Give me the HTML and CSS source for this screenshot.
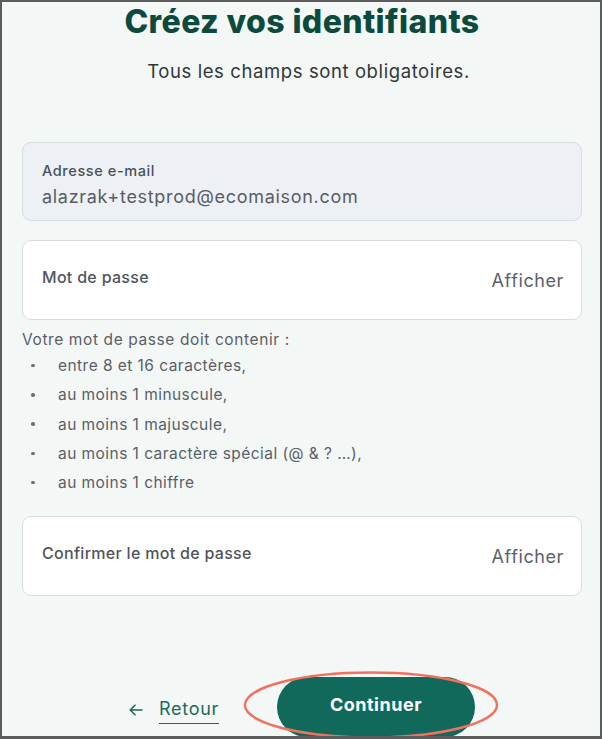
FILE: index.html
```html
<!DOCTYPE html>
<html lang="fr">
<head>
<meta charset="utf-8">
<title>Créez vos identifiants</title>
<link rel="stylesheet" href="styles.css">
</head>
<body>
<div class="frame">
  <main class="page">
    <h1 class="title">Créez vos identifiants</h1>
    <p class="subtitle">Tous les champs sont obligatoires.</p>

    <form class="form">
      <div class="field field-readonly">
        <span class="field-label">Adresse e-mail</span>
        <span class="field-value">alazrak+testprod@ecomaison.com</span>
      </div>

      <div class="field field-password">
        <span class="field-label">Mot de passe</span>
        <span class="show">Afficher</span>
      </div>

      <div class="rules">
        <p class="rules-intro">Votre mot de passe doit contenir :</p>
        <ul class="rules-list">
          <li>entre 8 et 16 caractères,</li>
          <li>au moins 1 minuscule,</li>
          <li>au moins 1 majuscule,</li>
          <li>au moins 1 caractère spécial (@ &amp; ? …),</li>
          <li>au moins 1 chiffre</li>
        </ul>
      </div>

      <div class="field field-password">
        <span class="field-label">Confirmer le mot de passe</span>
        <span class="show">Afficher</span>
      </div>
    </form>

    <div class="actions">
      <a class="back" href="#">
        <svg class="back-icon" width="14" height="12" viewBox="0 0 14 12" aria-hidden="true">
          <path d="M13 6H1.5M6 1.2L1.2 6L6 10.8" fill="none" stroke="currentColor" stroke-width="1.6" stroke-linecap="round" stroke-linejoin="round"/>
        </svg>
        <span class="back-text">Retour</span>
      </a>
      <div class="cta-wrap">
        <button class="cta" type="button">Continuer</button>
        <svg class="annotation" width="258" height="70" viewBox="0 0 258 70" aria-hidden="true">
          <ellipse cx="129" cy="35" rx="126" ry="32.5" fill="none" stroke="#f2705e" stroke-width="2.4"/>
        </svg>
      </div>
    </div>
  </main>
</div>
</body>
</html>
```

FILE: styles.css
```css
* {
  box-sizing: border-box;
}

html, body {
  margin: 0;
  padding: 0;
}

body {
  font-family: "Inter", "Noto Sans", sans-serif;
  background: #5c5c5c;
}

.frame {
  width: 602px;
  height: 739px;
  border-style: solid;
  border-color: #5c5c5c;
  border-width: 2px 2px 3px 2px;
  background: #f3f7f6;
  overflow: hidden;
}

.page {
  display: flex;
  flex-direction: column;
  padding: 0 18px 0 20px;
}

.title {
  margin: 0;
  font-size: 32px;
  line-height: 40px;
  font-weight: 800;
  color: #0d4a3e;
  text-align: center;
  letter-spacing: 0.4px;
}

.subtitle {
  margin: 17px 0 0;
  padding-left: 13px;
  font-size: 18.5px;
  line-height: 24px;
  letter-spacing: 0.6px;
  color: #30383a;
  text-align: center;
}

.form {
  margin-top: 59px;
  display: flex;
  flex-direction: column;
}

.field {
  border: 1px solid #d7dde1;
  border-radius: 9px;
  background: #ffffff;
  height: 80px;
}

.field-readonly {
  background: #edf0f4;
  height: 79px;
  display: flex;
  flex-direction: column;
  padding: 19px 19px 0;
  gap: 5px;
}

.field-readonly .field-label {
  font-size: 14.5px;
  line-height: 18px;
  letter-spacing: 0.6px;
  font-weight: 500;
  color: #4a505a;
}

.field-value {
  font-size: 18px;
  line-height: 24px;
  letter-spacing: 0.7px;
  color: #585d66;
}

.field-password {
  margin-top: 19px;
  display: flex;
  align-items: center;
  justify-content: space-between;
  padding: 0 17px 0 19px;
}

.field-password .field-label {
  font-size: 16px;
  letter-spacing: 0.3px;
  font-weight: 500;
  color: #50555e;
  margin-bottom: 6px;
}

.show {
  font-size: 18px;
  letter-spacing: 0.6px;
  color: #5c6169;
}

.rules {
  margin-top: 9px;
  color: #5a5f66;
  font-size: 15.5px;
  letter-spacing: 0.45px;
}

.rules-intro {
  margin: 0;
  line-height: 22px;
  letter-spacing: 0.6px;
}

.rules-list {
  list-style: none;
  margin: 0;
  padding: 0;
}

.rules-list li {
  display: flex;
  align-items: center;
  line-height: 29.25px;
}

.rules-list li::before {
  content: "";
  width: 3.5px;
  height: 3.5px;
  border-radius: 50%;
  background: #6a6f76;
  margin: 0 23.5px 0 9px;
  flex: none;
}

.actions {
  margin-top: 81px;
  display: flex;
  align-items: center;
  justify-content: center;
  gap: 58px;
}

.back {
  display: flex;
  align-items: center;
  gap: 16px;
  color: #1d6a5a;
  text-decoration: none;
  margin-top: 6px;
}

.back-icon {
  display: block;
}

.back-text {
  font-size: 18px;
  line-height: 24px;
  letter-spacing: 0.7px;
  border-bottom: 1.5px solid #1d6a5a;
  padding-bottom: 2px;
}

.cta-wrap {
  position: relative;
}

.cta {
  display: block;
  width: 198px;
  height: 60px;
  border: 0;
  border-radius: 30px;
  background: #10695a;
  color: #ffffff;
  font-family: inherit;
  font-size: 18px;
  letter-spacing: 0.5px;
  font-weight: 700;
  padding: 0;
  padding-bottom: 6px;
}

.annotation {
  position: absolute;
  left: -35px;
  top: -7px;
  pointer-events: none;
}
```
